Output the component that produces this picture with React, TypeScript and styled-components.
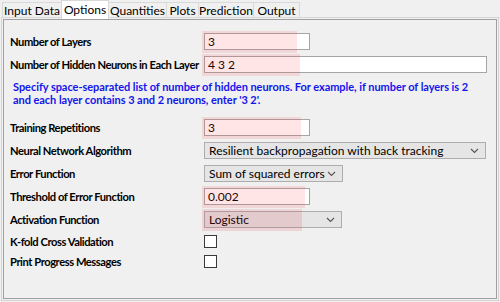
import React from "react";
import styled, { createGlobalStyle } from "styled-components";

const Global = createGlobalStyle`
  html, body { margin: 0; padding: 0; background: #f0f0f0; }
  body { font-family: Lato, "Open Sans", "Liberation Sans", sans-serif; font-size: 12px; color: #000; }
  * { box-sizing: border-box; }
`;

const Page = styled.div`
  width: 500px;
  height: 302px;
  position: relative;
  background: #f0f0f0;
`;

const TabBar = styled.div`
  display: flex;
  height: 18px;
  padding-left: 3px;
  align-items: flex-end;
  position: relative;
  z-index: 2;
`;

const Tab = styled.div<{ $active?: boolean; $w: number }>`
  width: ${(p) => p.$w}px;
  height: ${(p) => (p.$active ? "19px" : "16px")};
  margin-bottom: ${(p) => (p.$active ? "-1px" : "0")};
  padding-bottom: ${(p) => (p.$active ? "2px" : "0")};
  display: flex;
  align-items: center;
  justify-content: center;
  background: ${(p) => (p.$active ? "#ffffff" : "#f0f0f0")};
  border: 1px solid #d9d9d9;
  border-bottom: ${(p) => (p.$active ? "none" : "1px solid #d9d9d9")};
  margin-left: -1px;
  font-size: 12px;
  white-space: nowrap;
`;

const PanelOuter = styled.div`
  position: absolute;
  left: 1px;
  top: 17px;
  width: 498px;
  height: 284px;
  border: 1px solid #d4d4d4;
  padding: 1px;
`;

const PanelInner = styled.div`
  width: 100%;
  height: 100%;
  border: 1px solid #a0a0a0;
  padding: 10px 0 0 6px;
`;

const Grid = styled.div`
  display: grid;
  grid-template-columns: 194px 1fr;
`;

const Label = styled.div<{ $h?: number }>`
  height: ${(p) => p.$h ?? 23}px;
  display: flex;
  align-items: center;
  font-weight: 700;
  font-size: 11.2px;
  letter-spacing: -0.45px;
  white-space: nowrap;
`;

const Cell = styled.div<{ $h?: number }>`
  height: ${(p) => p.$h ?? 23}px;
  display: flex;
  align-items: center;
  position: relative;
`;

const Note = styled.div`
  grid-column: 1 / span 2;
  color: #1414ee;
  font-weight: 700;
  font-size: 11px;
  letter-spacing: -0.05px;
  line-height: 13px;
  padding: 4px 0 0 3px;
  height: 40px;
  white-space: nowrap;
`;

const TextInput = styled.div<{ $w: number }>`
  width: ${(p) => p.$w}px;
  height: 17px;
  background: #fff;
  border: 1px solid #a5a5a5;
  padding-left: 3px;
  display: flex;
  align-items: center;
  font-size: 12px;
`;

const Select = styled.div<{ $w: number }>`
  width: ${(p) => p.$w}px;
  height: 17px;
  background: #e5e5e5;
  border: 1px solid #adadad;
  padding: 0 6px 0 4px;
  display: flex;
  align-items: center;
  justify-content: space-between;
  font-size: 12px;
  white-space: nowrap;
`;

const Highlight = styled.div<{ $w: number; $strong?: boolean }>`
  position: absolute;
  left: -2px;
  top: 50%;
  margin-top: -11px;
  height: 22px;
  width: ${(p) => p.$w}px;
  background: ${(p) => (p.$strong ? "rgba(220, 40, 60, 0.14)" : "rgba(255, 40, 40, 0.12)")};
  pointer-events: none;
`;

const Checkbox = styled.div`
  width: 13px;
  height: 13px;
  border: 1px solid #3a3a3a;
  background: #fff;
`;

const Chevron = () => (
  <svg width="9" height="6" viewBox="0 0 9 6">
    <path d="M1 1 L4.5 4.5 L8 1" fill="none" stroke="#555" strokeWidth="1.1" />
  </svg>
);

const tabs: [string, number][] = [
  ["Input Data", 60],
  ["Options", 48],
  ["Quantities", 59],
  ["Plots", 33],
  ["Prediction", 56],
  ["Output", 47],
];

export default function App() {
  return (
    <Page>
      <Global />
      <TabBar>
        {tabs.map(([t, w]) => (
          <Tab key={t} $w={w} $active={t === "Options"}>
            {t}
          </Tab>
        ))}
      </TabBar>
      <PanelOuter>
        <PanelInner>
          <Grid>
            <Label>Number of Layers</Label>
            <Cell>
              <TextInput $w={106}>3</TextInput>
              <Highlight $w={95} />
            </Cell>

            <Label>Number of Hidden Neurons in Each Layer</Label>
            <Cell>
              <TextInput $w={283}>4 3 2</TextInput>
              <Highlight $w={98} />
            </Cell>

            <Note>
              Specify space-separated list of number of hidden neurons. For example, if number of layers is 2
              <br />
              and each layer contains 3 and 2 neurons, enter '3 2'.
            </Note>

            <Label>Training Repetitions</Label>
            <Cell>
              <TextInput $w={106}>3</TextInput>
              <Highlight $w={99} />
            </Cell>

            <Label>Neural Network Algorithm</Label>
            <Cell>
              <Select $w={282}>
                <span>Resilient backpropagation with back tracking</span>
                <Chevron />
              </Select>
            </Cell>

            <Label>Error Function</Label>
            <Cell>
              <Select $w={139}>
                <span>Sum of squared errors</span>
                <Chevron />
              </Select>
            </Cell>

            <Label>Threshold of Error Function</Label>
            <Cell>
              <TextInput $w={106}>0.002</TextInput>
              <Highlight $w={103} />
            </Cell>

            <Label>Activation Function</Label>
            <Cell>
              <Select $w={138}>
                <span>Logistic</span>
                <Chevron />
              </Select>
              <Highlight $w={100} $strong />
            </Cell>

            <Label $h={20}>K-fold Cross Validation</Label>
            <Cell $h={20}>
              <Checkbox />
            </Cell>

            <Label $h={20}>Print Progress Messages</Label>
            <Cell $h={20}>
              <Checkbox />
            </Cell>
          </Grid>
        </PanelInner>
      </PanelOuter>
    </Page>
  );
}
